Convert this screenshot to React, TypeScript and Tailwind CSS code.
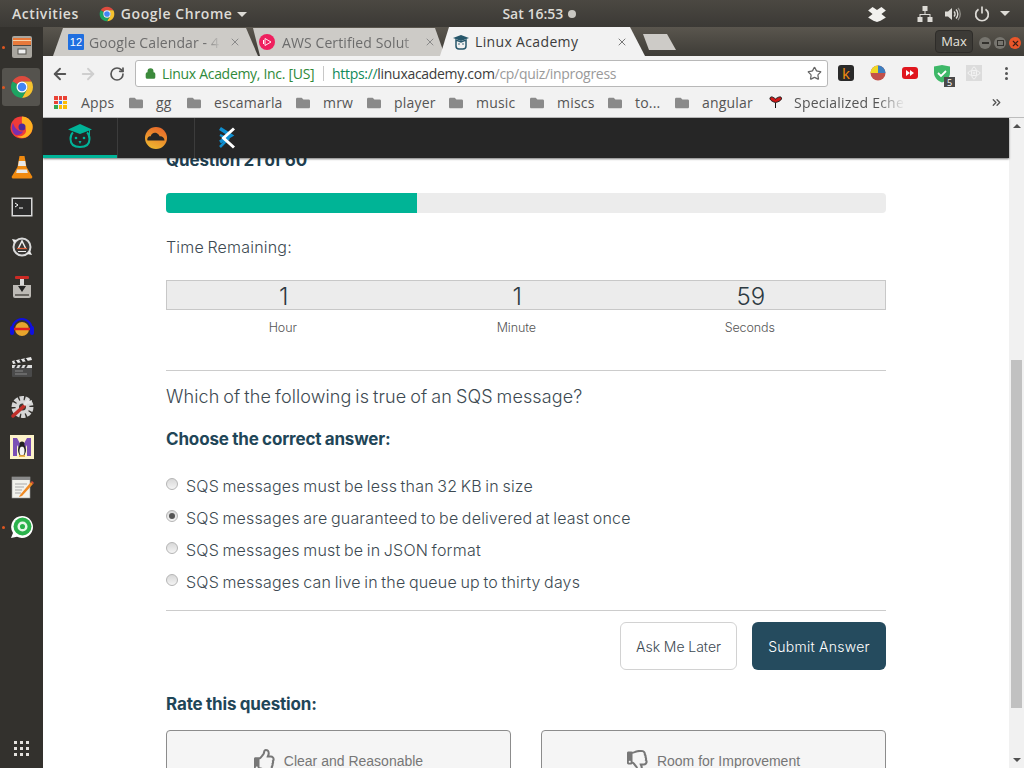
import { ArrowLeft, ArrowRight, RotateCw, Star, Lock, X, ChevronsRight } from "lucide-react";
import { FaFolder, FaRegThumbsUp, FaRegThumbsDown } from "react-icons/fa";

const ui = "font-['Open_Sans','Noto_Sans',sans-serif]";

function ChromeIcon({ size = 24 }: { size?: number }) {
  return (
    <svg width={size} height={size} viewBox="0 0 48 48">
      <path d="M24 2A22 22 0 0 1 43.050 13H24A11 11 0 0 0 14.470 18.500L4.950 13A22 22 0 0 1 24 2z" fill="#dd4b3e" />
      <path d="M24 13H43.050A22 22 0 0 1 24 46L33.530 29.500A11 11 0 0 0 24 13z" fill="#f6c22e" />
      <path d="M4.950 13A22 22 0 0 0 24 46L33.530 29.500A11 11 0 0 1 14.470 18.500z" fill="#1da462" />
      <circle cx="24" cy="24" r="11" fill="#fff" />
      <circle cx="24" cy="24" r="8.500" fill="#4285f4" />
    </svg>
  );
}

function FilesIcon() {
  return (
    <svg width="22" height="24" viewBox="0 0 22 24">
      <rect x="1" y="1" width="20" height="22" rx="2" fill="#a9a69f" />
      <rect x="2" y="3" width="18" height="7" fill="#e8793a" />
      <rect x="2" y="5" width="18" height="1" fill="#f7d3a8" />
      <rect x="2" y="10" width="18" height="1" fill="#4d4a45" />
      <rect x="7" y="14" width="8" height="5" fill="#eee" stroke="#55524c" />
    </svg>
  );
}

function FirefoxIcon() {
  return (
    <svg width="24" height="24" viewBox="0 0 24 24">
      <circle cx="11.500" cy="12.500" r="11" fill="#ef3b39" />
      <path d="M12 1.500a11 11 0 0 1 10.500 8c1 5-1.500 11-7 13a11 11 0 0 1-9-1.500c5 1 9-1 9.500-5 .3-3-2-5-4.500-5 1-2 0-4 .5-9.500z" fill="#ffb01f" />
      <path d="M3 8c2 6 6 9 10 8.500-1 3-5 4.500-8 3C2 17 1 12 3 8z" fill="#7a2fb0" />
      <circle cx="12" cy="12" r="3.500" fill="#4b2a9a" />
    </svg>
  );
}

function VlcIcon() {
  return (
    <svg width="22" height="24" viewBox="0 0 22 24">
      <path d="M8.500 1h5l2 11 6 10-1 1.500H1.500L.500 22l6-10z" fill="#f08a10" />
      <path d="M7.800 6h6.400l.8 5H7z" fill="#e8e8e8" />
      <path d="M6 14.500h10l.8 3.500H5.200z" fill="#e8e8e8" />
    </svg>
  );
}

function TerminalIcon() {
  return (
    <svg width="22" height="20" viewBox="0 0 22 20">
      <rect x=".5" y=".5" width="21" height="19" fill="#d8d8d8" />
      <rect x="2" y="2" width="18" height="16" fill="#2a2a2a" />
      <path d="M4 6l3 2-3 2" stroke="#fff" fill="none" />
      <path d="M8 11h4" stroke="#fff" />
    </svg>
  );
}

function UpdateIcon() {
  return (
    <svg width="22" height="22" viewBox="0 0 22 22">
      <circle cx="11" cy="11" r="8.500" fill="#3b3937" stroke="#d9d9d9" strokeWidth="2" />
      <path d="M7.500 12L11 5l3.500 7" stroke="#eee" strokeWidth="1.500" fill="none" />
      <path d="M6 12.500h10" stroke="#e0603a" strokeWidth="1.200" />
      <path d="M7 15.500h8" stroke="#eee" />
      <path d="M1 3l5 1-3 3zM21 19l-5-1 3-3z" fill="#eee" />
    </svg>
  );
}

function InstallerIcon() {
  return (
    <svg width="22" height="24" viewBox="0 0 22 24">
      <rect x="4" y="1" width="14" height="3" rx="1" fill="#cc2a24" />
      <rect x="9" y="4" width="4" height="8" fill="#d8d8d8" />
      <path d="M2 10h18v11a2 2 0 0 1-2 2H4a2 2 0 0 1-2-2z" fill="#bdbab5" />
      <path d="M7 11h8l-4 6z" fill="#222" />
      <rect x="4" y="19" width="14" height="2" fill="#6a6762" />
    </svg>
  );
}

function AudacityIcon() {
  return (
    <svg width="24" height="22" viewBox="0 0 24 22">
      <path d="M2 14a10 11 0 0 1 20 0" stroke="#1010e0" strokeWidth="2" fill="none" />
      <rect x="0" y="10" width="4" height="9" rx="2" fill="#1010e0" />
      <rect x="20" y="10" width="4" height="9" rx="2" fill="#1010e0" />
      <circle cx="12" cy="13" r="7" fill="#e7a52c" />
      <path d="M4 13h16" stroke="#e02020" strokeWidth="2.500" />
    </svg>
  );
}

function ClapperIcon() {
  return (
    <svg width="22" height="22" viewBox="0 0 22 22">
      <rect x="1" y="9" width="20" height="12" rx="1" fill="#4a4a4a" />
      <path d="M1 5l19-4 1 3L2 8z" fill="#e8e8e8" />
      <path d="M4 4.500l2 3M9 3.500l2 3M14 2.500l2 3" stroke="#222" strokeWidth="2" />
      <path d="M1 9h20v3H1z" fill="#ddd" />
      <path d="M4 12l2-3M9 12l2-3M14 12l2-3" stroke="#333" strokeWidth="2" />
      <path d="M4 15h8M4 18h12" stroke="#888" />
    </svg>
  );
}

function SettingsIcon() {
  return (
    <svg width="24" height="24" viewBox="0 0 24 24">
      <circle cx="12.500" cy="12" r="8.500" fill="none" stroke="#d6d6d6" strokeWidth="5" strokeDasharray="4 1.300" />
      <circle cx="12.500" cy="12" r="7" fill="#d6d6d6" />
      <circle cx="12.500" cy="12" r="3.500" fill="#3b3935" />
      <path d="M3 21L14 11" stroke="#c0302a" strokeWidth="3.500" strokeLinecap="round" />
      <path d="M14 10l5-5" stroke="#e5e5e5" strokeWidth="3" />
      <path d="M17 3l2 3 3-1-1 3-3 1" fill="#e5e5e5" />
    </svg>
  );
}

function TuxIcon() {
  return (
    <svg width="24" height="24" viewBox="0 0 24 24">
      <rect width="24" height="24" fill="#fdf3c9" />
      <path d="M3 21V3h4l5 9 5-9h4v18h-4V10l-5 8-5-8v11z" fill="#7b4fb5" />
      <ellipse cx="12" cy="15" rx="4" ry="6" fill="#222" />
      <ellipse cx="12" cy="16" rx="2.500" ry="4.500" fill="#f4f4f4" />
      <circle cx="12" cy="9" r="2.500" fill="#222" />
      <path d="M9 21h6" stroke="#e8a020" strokeWidth="1.500" />
    </svg>
  );
}

function NotesIcon() {
  return (
    <svg width="24" height="24" viewBox="0 0 24 24">
      <rect x="2" y="2" width="18" height="21" fill="#f2f2ec" stroke="#999" strokeWidth=".6" />
      <path d="M2 2h18v3H2z" fill="#8a8a8a" />
      <path d="M5 9h12M5 12h9M5 15h7M5 18h6" stroke="#aaa" />
      <path d="M10 20l11-13 2 2-11 12-3 1z" fill="#ef8a24" />
      <path d="M21 7l1-1 2 2-1 1z" fill="#d94b3a" />
    </svg>
  );
}

function GreenChatIcon() {
  return (
    <svg width="24" height="24" viewBox="0 0 24 24">
      <path d="M12 1a11 11 0 1 1-5 20.800L1 23l2-5A11 11 0 0 1 12 1z" fill="#fff" />
      <circle cx="12.500" cy="11.500" r="9" fill="#2bb24c" />
      <circle cx="12.500" cy="11.500" r="3.800" fill="none" stroke="#e8f6ea" strokeWidth="2.500" />
    </svg>
  );
}

function DropboxIcon() {
  return (
    <svg width="18" height="16" viewBox="0 0 20 18" fill="#f2f1ee">
      <path d="M5 1l5 3.500L15 1l5 4-5 4 5 4-6 3.500L10 18l-4-1.500L0 13l5-4-5-4z" />
    </svg>
  );
}

function NetworkIcon() {
  return (
    <svg width="16" height="16" viewBox="0 0 16 16" fill="#dddbd6">
      <rect x="5.500" y="0" width="5" height="5" />
      <rect x="0.500" y="11" width="5" height="5" />
      <rect x="10.500" y="11" width="5" height="5" />
      <path d="M7.500 5h1v3H13.500v3h-1V9h-9v2h-1V8h5z" />
    </svg>
  );
}

function VolumeIcon() {
  return (
    <svg width="16" height="16" viewBox="0 0 16 16" fill="none">
      <path d="M0 5.500h3L7 2v12L3 10.500H0z" fill="#dddbd6" />
      <path d="M9 5.500a3.500 3.500 0 0 1 0 5" stroke="#dddbd6" strokeWidth="1.400" />
      <path d="M11 3.500a6.500 6.500 0 0 1 0 9" stroke="#dddbd6" strokeWidth="1.400" />
      <path d="M13 2a9 9 0 0 1 0 12" stroke="#8d8b85" strokeWidth="1.400" />
    </svg>
  );
}

function PowerIcon() {
  return (
    <svg width="16" height="16" viewBox="0 0 16 16" fill="none" stroke="#dddbd6" strokeWidth="1.700">
      <path d="M4.500 3.200a6.300 6.300 0 1 0 7 0" />
      <path d="M8 0.500v7" />
    </svg>
  );
}

function CalendarFavicon() {
  return (
    <div className="flex h-4 w-4 shrink-0 items-center justify-center rounded-[1px] bg-[#1f6fe0] font-['Liberation_Sans',sans-serif] text-[11px] leading-none text-white">
      12
    </div>
  );
}

function AwsFavicon() {
  return (
    <svg width="16" height="16" viewBox="0 0 16 16" className="shrink-0">
      <circle cx="8" cy="8" r="8" fill="#ef1f5e" />
      <path d="M6 4.500L12 8l-6 3.500z" fill="none" stroke="#fff" strokeWidth=".9" />
      <path d="M4.500 6v4" stroke="#fff" />
    </svg>
  );
}

function LinuxAcademyFavicon() {
  return (
    <svg width="16" height="16" viewBox="0 0 16 16" className="shrink-0">
      <path d="M0 4l8-3 8 3-8 3z" fill="#27576b" />
      <path d="M3 6v6a3 3 0 0 0 3 3h4a3 3 0 0 0 3-3V6l-5 2z" fill="none" stroke="#27576b" strokeWidth="1.500" />
      <circle cx="6" cy="10" r=".8" fill="#27576b" />
      <circle cx="10" cy="10" r=".8" fill="#27576b" />
    </svg>
  );
}

function AppsGrid() {
  const dots = ["#e94235", "#e94235", "#e94235", "#e94235", "#4285f4", "#fbbc05", "#34a853", "#fbbc05", "#fbbc05"];
  return (
    <div className="grid w-[13px] grid-cols-3 gap-[1px]">
      {dots.map((c, i) => (
        <span key={i} className="h-[3.500px] w-[3.500px]" style={{ backgroundColor: c }} />
      ))}
    </div>
  );
}

function OwlLogo() {
  return (
    <svg width="24" height="24" viewBox="0 0 24 24" fill="none">
      <path d="M0 5.500L12 0l12 5.500-12 4.500z" fill="#00b398" />
      <path d="M21.500 6v5" stroke="#00b398" />
      <path d="M5 8.500C3 10 2.500 12 2.500 15c0 5 3.500 8 9.500 8s9.500-3 9.500-8c0-3-.5-5-2.500-6.500" stroke="#00b398" strokeWidth="2" />
      <circle cx="8" cy="14" r="1.300" fill="#00b398" />
      <circle cx="16" cy="14" r="1.300" fill="#00b398" />
      <path d="M10.500 17h3L12 20z" fill="#00b398" />
    </svg>
  );
}

function CloudLogo() {
  return (
    <svg width="22" height="22" viewBox="0 0 22 22">
      <defs>
        <linearGradient id="cloudRing" x1="0.700" y1="0" x2="0.300" y2="1">
          <stop offset="0" stopColor="#e8682a" />
          <stop offset="1" stopColor="#efb72f" />
        </linearGradient>
      </defs>
      <circle cx="11" cy="11" r="11" fill="url(#cloudRing)" />
      <path d="M2.500 13.500c-.8-2.500 1-4.500 3.200-4.300C6.300 6.500 9 5 11.500 6c1.700.7 2.800 2 3 3.300 2.500-.5 5 1.500 5 4.200z" fill="#262626" />
    </svg>
  );
}

function XLogo() {
  return (
    <svg width="16" height="22" viewBox="0 0 16 22" fill="none">
      <path d="M1 1.500L12 8.500 1 15" stroke="#0f8fd0" strokeWidth="3.500" />
      <path d="M1 8l8 4-8 8" stroke="#0f8fd0" strokeWidth="2.500" />
      <path d="M15 1.500L4.500 11 15 20.500" stroke="#fff" strokeWidth="3" />
    </svg>
  );
}

const dockItems = [
  { icon: <FilesIcon />, dot: true },
  { icon: <ChromeIcon size={24} />, dot: true, active: true },
  { icon: <FirefoxIcon /> },
  { icon: <VlcIcon /> },
  { icon: <TerminalIcon /> },
  { icon: <UpdateIcon /> },
  { icon: <InstallerIcon /> },
  { icon: <AudacityIcon /> },
  { icon: <ClapperIcon /> },
  { icon: <SettingsIcon /> },
  { icon: <TuxIcon /> },
  { icon: <NotesIcon /> },
  { icon: <GreenChatIcon />, dot: true },
];

const bookmarks = [
  { label: "gg", width: "w-[18px]" },
  { label: "escamarla", width: "w-[69px]" },
  { label: "mrw", width: "w-[31px]" },
  { label: "player", width: "w-[42px]" },
  { label: "music", width: "w-[41px]" },
  { label: "miscs", width: "w-[38px]" },
  { label: "to...", width: "w-[27px]" },
  { label: "angular", width: "w-[53px]" },
];

const answers = [
  "SQS messages must be less than 32 KB in size",
  "SQS messages are guaranteed to be delivered at least once",
  "SQS messages must be in JSON format",
  "SQS messages can live in the queue up to thirty days",
];

function Dock() {
  return (
    <aside className="flex w-[43px] shrink-0 flex-col items-center bg-[#33312d]">
      {dockItems.map((item, i) => (
        <div key={i} className="relative flex h-10 w-full items-center justify-center">
          {item.active && <div className="absolute top-[1px] left-[2px] h-[38px] w-[38px] rounded-[3px] bg-[#55534e]" />}
          {item.dot && <div className="absolute top-[18.500px] left-[2px] h-[3px] w-[3px] rounded-full bg-[#e2561f]" />}
          <div className="relative flex">{item.icon}</div>
        </div>
      ))}
      <div className="mt-auto grid h-10 grid-cols-3 content-center gap-[3px]">
        {Array.from({ length: 9 }).map((_, i) => (
          <span key={i} className="h-[3px] w-[3px] bg-[#e4e2de]" />
        ))}
      </div>
    </aside>
  );
}

function TabStrip() {
  return (
    <div className={`flex h-[29px] items-end bg-gradient-to-b from-[#5a564e] to-[#3e3c37] pl-[10px] ${ui}`}>
      <div className="flex h-[28px] w-[205px] shrink-0 items-center bg-[#cdcbc7] pr-[17px] pl-[15px] text-[14px] tracking-[0.1px] text-[#6c6c6c] [clip-path:polygon(10px_0,193px_0,100%_100%,0_100%)]">
        <CalendarFavicon />
        <span className="ml-[5px] w-[132px] overflow-hidden whitespace-nowrap [mask-image:linear-gradient(to_right,black_88%,transparent)]">Google Calendar - 4</span>
        <X size={12} className="ml-auto text-[#8a8a8a]" />
      </div>
      <div className="-ml-[5px] flex h-[28px] w-[192px] shrink-0 items-center bg-[#cdcbc7] pr-[9px] pl-[6px] text-[14px] tracking-[0.1px] text-[#6c6c6c] [clip-path:polygon(0_0,182px_0,100%_100%,7px_100%)]">
        <AwsFavicon />
        <span className="ml-[7px] w-[136px] overflow-hidden whitespace-nowrap [mask-image:linear-gradient(to_right,black_88%,transparent)]">AWS Certified Solut</span>
        <X size={12} className="ml-auto text-[#8a8a8a]" />
      </div>
      <div className="-ml-[5px] flex h-[29px] w-[205px] shrink-0 items-center bg-[#f2f2f2] pr-[17px] pl-[13px] text-[14px] tracking-[0.35px] text-[#3c3c3c] [clip-path:polygon(9px_0,190px_0,100%_100%,0_100%)]">
        <LinuxAcademyFavicon />
        <span className="ml-[6px] whitespace-nowrap">Linux Academy</span>
        <X size={12} className="ml-auto text-[#777]" />
      </div>
      <div className="-ml-[2px] mb-[6px] h-[16px] w-[33px] shrink-0 bg-[#cdcbc7] [clip-path:polygon(0_0,24px_0,100%_100%,6px_100%)]" />
      <div className="mb-[3px] ml-auto flex h-[23px] w-[38px] items-center justify-center rounded-[4px] border border-[#2e2c29] bg-[#3c3a36] text-[13px] text-[#e6e4df]">
        Max
      </div>
      <div className="mr-[3px] mb-[7px] ml-[6px] flex items-center gap-[3px]">
        <span className="flex h-3 w-3 items-center justify-center rounded-full bg-[#77756f]">
          <span className="h-[2px] w-[7px] bg-[#33312d]" />
        </span>
        <span className="flex h-3 w-3 items-center justify-center rounded-full bg-[#77756f]">
          <span className="h-[6px] w-[7px] border border-[#33312d]" />
        </span>
        <span className="flex h-3 w-3 items-center justify-center rounded-full bg-[#e9562a]">
          <X size={9} strokeWidth={3} className="text-[#3a2018]" />
        </span>
      </div>
    </div>
  );
}

function Toolbar() {
  return (
    <div className={`flex h-[34px] items-center bg-[#f2f2f2] pl-[8px] ${ui}`}>
      <ArrowLeft size={18} strokeWidth={2.500} className="mt-[1px] text-[#555]" />
      <ArrowRight size={18} strokeWidth={2.500} className="mt-[1px] ml-[10px] text-[#cfcfcf]" />
      <RotateCw size={16} strokeWidth={2.500} className="mt-[1px] ml-[12px] text-[#555]" />
      <div className="ml-[10px] flex h-[27px] w-[693px] shrink-0 items-center rounded-[3px] border border-[#b8b8b8] bg-white pl-[9px] text-[14px] tracking-[-0.3px] whitespace-nowrap">
        <Lock size={11} strokeWidth={3} className="fill-[#3c8a3c] text-[#3c8a3c]" />
        <span className="ml-[6px] w-[152px] text-[#2f8a3a]">Linux Academy, Inc. [US]</span>
        <span className="mr-[8px] ml-[9px] h-[15px] w-px bg-[#c8c8c8]" />
        <span className="text-[#0f8a5a]">https://</span>
        <span className="text-[#3c3c3c]">linuxacademy.com</span>
        <span className="text-[#9a9a9a]">/cp/quiz/inprogress</span>
        <Star size={15} className="mr-[5px] ml-auto text-[#666]" />
      </div>
      <div className="ml-[10px] flex h-4 w-4 items-center justify-center rounded-[3px] bg-[#2a2a2a] font-['Liberation_Sans',sans-serif] text-[15px] leading-none text-[#f08a10]">
        k
      </div>
      <svg width="16" height="16" viewBox="0 0 16 16" className="ml-[16px]">
        <circle cx="8" cy="8" r="7.500" fill="#c2504a" />
        <path d="M8 8V.500a7.500 7.500 0 0 1 7.500 7.500z" fill="#3c7fc0" />
        <path d="M8 8V.500A7.500 7.500 0 0 0 .500 8z" fill="#f0d824" />
      </svg>
      <svg width="16" height="14" viewBox="0 0 16 14" className="ml-[16px]">
        <rect width="16" height="12" y="1" rx="3" fill="#e0161e" />
        <path d="M4 4l4 3-4 3zM8 4l4 3-4 3z" fill="#fff" />
      </svg>
      <div className="relative ml-[16px] h-4 w-4">
        <svg width="16" height="18" viewBox="0 0 16 18">
          <path d="M0 1.500L8 0l8 1.500V8c0 4-3.500 8-8 9.500C3.500 16 0 12 0 8z" fill="#3eb868" />
          <path d="M4 8l3 3 5-5" stroke="#fff" strokeWidth="1.800" fill="none" />
        </svg>
        <div className="absolute top-[12px] left-[10px] flex h-[10px] w-[11px] items-center justify-center bg-[#4a4a4a] text-[9px] leading-none text-white">
          5
        </div>
      </div>
      <div className="ml-[16px] flex h-4 w-4 items-center justify-center bg-[#dcdcdc]">
        <svg width="14" height="14" viewBox="0 0 14 14" fill="none" stroke="#f4f4f4">
          <ellipse cx="7" cy="7" rx="6" ry="2.500" />
          <ellipse cx="7" cy="7" rx="2.500" ry="6" />
          <circle cx="7" cy="7" r="1" />
        </svg>
      </div>
      <div className="mt-[1px] ml-[23px] flex flex-col gap-[2px]">
        <span className="h-[3px] w-[3px] rounded-full bg-[#555]" />
        <span className="h-[3px] w-[3px] rounded-full bg-[#555]" />
        <span className="h-[3px] w-[3px] rounded-full bg-[#555]" />
      </div>
    </div>
  );
}

function BookmarksBar() {
  return (
    <div className={`flex h-[28px] items-center border-b border-[#bdbdbd] bg-[#f2f2f2] pb-[2px] pl-[11px] text-[14px] tracking-[0.2px] whitespace-nowrap text-[#555] ${ui}`}>
      <AppsGrid />
      <span className="ml-[14px] w-[35px]">Apps</span>
      {bookmarks.map((b) => (
        <div key={b.label} className="ml-[13px] flex items-center">
          <FaFolder size={14} className="text-[#8a8a8a]" />
          <span className={`ml-[13px] ${b.width}`}>{b.label}</span>
        </div>
      ))}
      <svg width="15" height="15" viewBox="0 0 15 15" className="ml-[13px]">
        <path d="M7.500 8v5M2 3c1-2 3-1 5.500 1C10 2 13 1 13.500 3c.5 2-3 4-6 4.500C5 7 1.500 5 2 3z" fill="#d01818" stroke="#111" strokeWidth="1" />
      </svg>
      <span className="ml-[11px] w-[111px] [mask-image:linear-gradient(to_right,black_75%,transparent)]">Specialized Eche</span>
      <ChevronsRight size={13} strokeWidth={2.500} className="ml-[85px] text-[#555]" />
    </div>
  );
}

function AppBar() {
  return (
    <div className="relative z-10 flex h-[40px] shrink-0 items-stretch bg-[#262626] shadow-[0_1px_2px_rgba(0,0,0,0.55)]">
      <div className="flex w-[74px] items-center justify-center border-b-[3px] border-[#00b398] pb-[1px]">
        <OwlLogo />
      </div>
      <div className="w-px bg-[#3c3c3c]" />
      <div className="flex w-[76px] items-center justify-center">
        <CloudLogo />
      </div>
      <div className="w-px bg-[#3c3c3c]" />
      <div className="flex w-[64px] items-center justify-center">
        <XLogo />
      </div>
    </div>
  );
}

function Quiz() {
  return (
    <main className="flex-1 overflow-hidden bg-white font-['Inter',sans-serif] text-[#3d4a52]">
      <div className="mx-auto w-[720px]">
        <h2 className="-mt-[10px] h-6 text-[17px] leading-6 font-bold tracking-[-0.15px] [word-spacing:-0.5px] text-[#1f3f50]">Question 21 of 60</h2>
        <div className="mt-[21px] h-5 overflow-hidden rounded-[4px] bg-[#ececec]">
          <div className="h-5 w-[251px] bg-[#00b496]" />
        </div>
        <p className="mt-[22px] h-6 text-[16px] leading-6 font-light tracking-[0.2px] [word-spacing:-1.2px]">Time Remaining:</p>
        <div className="mt-[21px] grid h-[30px] grid-cols-[repeat(3,233.5px)] border border-[#c8c8c8] bg-[#ececec] text-center text-[24px] leading-[31px] font-light text-[#2c3a42]">
          <span>1</span>
          <span>1</span>
          <span>59</span>
        </div>
        <div className="mt-[8px] grid h-[19px] grid-cols-[repeat(3,233.5px)] text-center text-[12.500px] leading-5 font-light tracking-[-0.1px] text-[#555]">
          <span>Hour</span>
          <span>Minute</span>
          <span>Seconds</span>
        </div>
        <div className="mt-[33px] h-px bg-[#cccccc]" />
        <h3 className="mt-[12px] h-[27px] text-[18px] leading-7 font-light tracking-[0.1px] [word-spacing:-1.2px]">Which of the following is true of an SQS message?</h3>
        <h4 className="mt-[17px] h-6 text-[17px] leading-6 font-bold tracking-[-0.15px] [word-spacing:-0.5px] text-[#1f4658]">Choose the correct answer:</h4>
        <div className="mt-[19px]">
          {answers.map((a, i) => (
            <label key={a} className="flex h-8 items-center text-[16px] font-light tracking-[0.2px] [word-spacing:-1.2px]">
              <span className="mb-[4px] flex h-3 w-3 items-center justify-center rounded-full border border-[#b5b5b5] bg-gradient-to-b from-[#d8d8d8] to-[#f4f4f4]">
                {i === 1 && <span className="h-[6px] w-[6px] rounded-full bg-[#555]" />}
              </span>
              <span className="ml-2">{a}</span>
            </label>
          ))}
        </div>
        <div className="mt-[12px] h-px bg-[#cccccc]" />
        <div className="mt-[11px] flex justify-end gap-[15px] text-[14px] font-light [word-spacing:-0.8px]">
          <button className="h-12 w-[117px] rounded-[6px] border border-[#d2d2d2] bg-white tracking-[-0.05px] text-[#3d4a52]">Ask Me Later</button>
          <button className="h-12 w-[134px] rounded-[6px] bg-[#254b5e] tracking-[0.25px] text-white">Submit Answer</button>
        </div>
        <h4 className="mt-[22px] h-6 text-[17px] leading-6 font-bold tracking-[-0.15px] [word-spacing:-0.5px] text-[#1f4658]">Rate this question:</h4>
        <div className="mt-[14px] flex justify-between font-['Liberation_Sans',sans-serif] text-[14px] text-[#777]">
          <button className="flex h-[60px] w-[345px] items-start justify-center gap-2 rounded-[4px] border border-[#8c8c8c] bg-[#f5f5f5] pt-[20px]">
            <FaRegThumbsUp size={22} className="-mt-[2px] text-[#777]" />
            Clear and Reasonable
          </button>
          <button className="flex h-[60px] w-[345px] items-start justify-center gap-2 rounded-[4px] border border-[#8c8c8c] bg-[#f5f5f5] pt-[20px]">
            <FaRegThumbsDown size={22} className="-mt-[1px] text-[#777]" />
            Room for Improvement
          </button>
        </div>
      </div>
    </main>
  );
}

function Scrollbar() {
  return (
    <div className="flex w-[15px] shrink-0 flex-col items-center bg-[#f1f1f1]">
      <div className="mt-[6px] h-0 w-0 border-x-[4px] border-b-[4px] border-x-transparent border-b-[#505050]" />
      <div className="mt-[232px] h-[348px] w-[11px] bg-[#c1c1c1]" />
      <div className="mt-auto mb-[6px] h-0 w-0 border-x-[4px] border-t-[4px] border-x-transparent border-t-[#505050]" />
    </div>
  );
}

export default function App() {
  return (
    <div className="flex h-[768px] w-[1024px] flex-col overflow-hidden">
      <header className={`flex h-[27px] shrink-0 items-center bg-gradient-to-b from-[#4b4842] to-[#3b3935] text-[14px] font-semibold tracking-[0.55px] text-[#dddbd6] ${ui}`}>
        <span className="ml-[12px]">Activities</span>
        <span className="ml-[20px]">
          <ChromeIcon size={16} />
        </span>
        <span className="ml-[6px]">Google Chrome</span>
        <span className="mt-[1px] ml-[5px] h-0 w-0 border-x-[5px] border-t-[5px] border-x-transparent border-t-[#dddbd6]" />
        <span className="ml-[255px] tracking-normal">Sat 16:53</span>
        <span className="ml-[5px] h-2 w-2 rounded-full bg-[#c9c7c2]" />
        <span className="ml-[292px]">
          <DropboxIcon />
        </span>
        <span className="ml-[31px]">
          <NetworkIcon />
        </span>
        <span className="ml-[12px]">
          <VolumeIcon />
        </span>
        <span className="ml-[13px]">
          <PowerIcon />
        </span>
        <span className="ml-[10px] h-0 w-0 border-x-[5px] border-t-[5px] border-x-transparent border-t-[#dddbd6]" />
      </header>
      <div className="flex min-h-0 flex-1">
        <Dock />
        <div className="flex min-w-0 flex-1 flex-col">
          <TabStrip />
          <Toolbar />
          <BookmarksBar />
          <div className="flex min-h-0 flex-1">
            <div className="flex min-w-0 flex-1 flex-col">
              <AppBar />
              <Quiz />
            </div>
            <Scrollbar />
          </div>
        </div>
      </div>
    </div>
  );
}
